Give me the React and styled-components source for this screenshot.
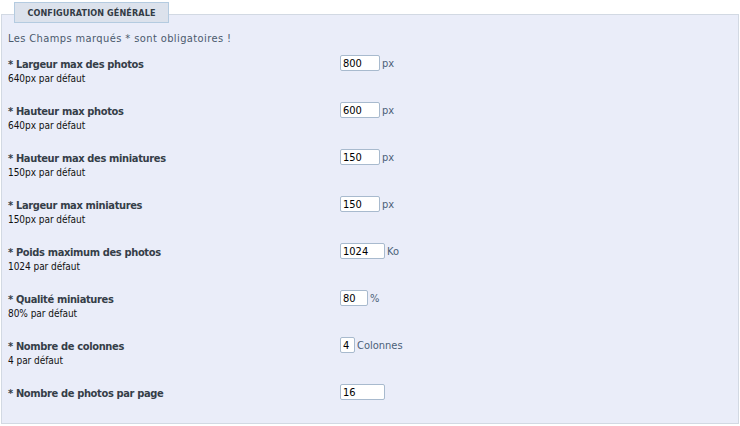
import React from "react";
import styled, { createGlobalStyle } from "styled-components";

const GlobalStyle = createGlobalStyle`
  body {
    margin: 0;
    background: #ffffff;
    font-family: "DejaVu Sans Condensed", "DejaVu Sans", sans-serif;
  }
`;

const Page = styled.div`
  width: 740px;
  height: 426px;
  padding: 2px 1px 2px 1px;
  box-sizing: border-box;
`;

const Tab = styled.div`
  position: relative;
  z-index: 1;
  width: 155px;
  height: 21px;
  margin-left: 13px;
  box-sizing: border-box;
  background: #dce2ec;
  border: 1px solid #b4cbe0;
  display: flex;
  align-items: center;
  justify-content: center;
  font-size: 9px;
  font-weight: bold;
  color: #333b44;
  letter-spacing: 0.1px;
  text-transform: uppercase;
`;

const Panel = styled.div`
  margin-top: -9px;
  height: 410px;
  box-sizing: border-box;
  background: #eaedf9;
  border: 1px solid #d2d9e3;
  padding: 17px 6px 0 6px;
`;

const Intro = styled.p`
  margin: 0 0 12px 0;
  font-size: 11px;
  line-height: 14px;
  letter-spacing: 0.4px;
  color: #4a5a6d;
`;

const Row = styled.div`
  display: grid;
  grid-template-columns: 332px 1fr;
  height: 47px;
`;

const LabelCol = styled.div`
  display: flex;
  flex-direction: column;
`;

const Label = styled.span`
  font-size: 11px;
  font-weight: bold;
  line-height: 14px;
  letter-spacing: -0.35px;
  color: #353e48;
`;

const Hint = styled.span`
  font-size: 10px;
  line-height: 14px;
  letter-spacing: -0.05px;
  color: #111;
`;

const Field = styled.div`
  display: flex;
  align-items: center;
  gap: 2px;
  height: 16px;
  margin-top: -3px;
`;

const Input = styled.input`
  width: ${(p) => p.$w}px;
  height: 16px;
  box-sizing: border-box;
  margin: 0;
  padding: 0 2px;
  border: 1px solid #a8bace;
  border-radius: 2px;
  background: #fff;
  font-family: "DejaVu Sans Condensed", "DejaVu Sans", sans-serif;
  font-size: 11px;
  color: #000;
  outline: none;
`;

const Unit = styled.span`
  font-size: 11px;
  color: #4a6078;
`;

const rows = [
  { label: "Largeur max des photos", hint: "640px par défaut", value: "800", w: 40, unit: "px" },
  { label: "Hauteur max photos", hint: "640px par défaut", value: "600", w: 40, unit: "px" },
  { label: "Hauteur max des miniatures", hint: "150px par défaut", value: "150", w: 40, unit: "px" },
  { label: "Largeur max miniatures", hint: "150px par défaut", value: "150", w: 40, unit: "px" },
  { label: "Poids maximum des photos", hint: "1024 par défaut", value: "1024", w: 45, unit: "Ko" },
  { label: "Qualité miniatures", hint: "80% par défaut", value: "80", w: 28, unit: "%" },
  { label: "Nombre de colonnes", hint: "4 par défaut", value: "4", w: 15, unit: "Colonnes" },
  { label: "Nombre de photos par page", hint: "", value: "16", w: 45, unit: "" },
];

export default function App() {
  return (
    <Page>
      <GlobalStyle />
      <Tab>Configuration générale</Tab>
      <Panel>
        <Intro>Les Champs marqués * sont obligatoires !</Intro>
        {rows.map((r) => (
          <Row key={r.label}>
            <LabelCol>
              <Label>* {r.label}</Label>
              {r.hint && <Hint>{r.hint}</Hint>}
            </LabelCol>
            <Field>
              <Input $w={r.w} defaultValue={r.value} />
              {r.unit && <Unit>{r.unit}</Unit>}
            </Field>
          </Row>
        ))}
      </Panel>
    </Page>
  );
}
